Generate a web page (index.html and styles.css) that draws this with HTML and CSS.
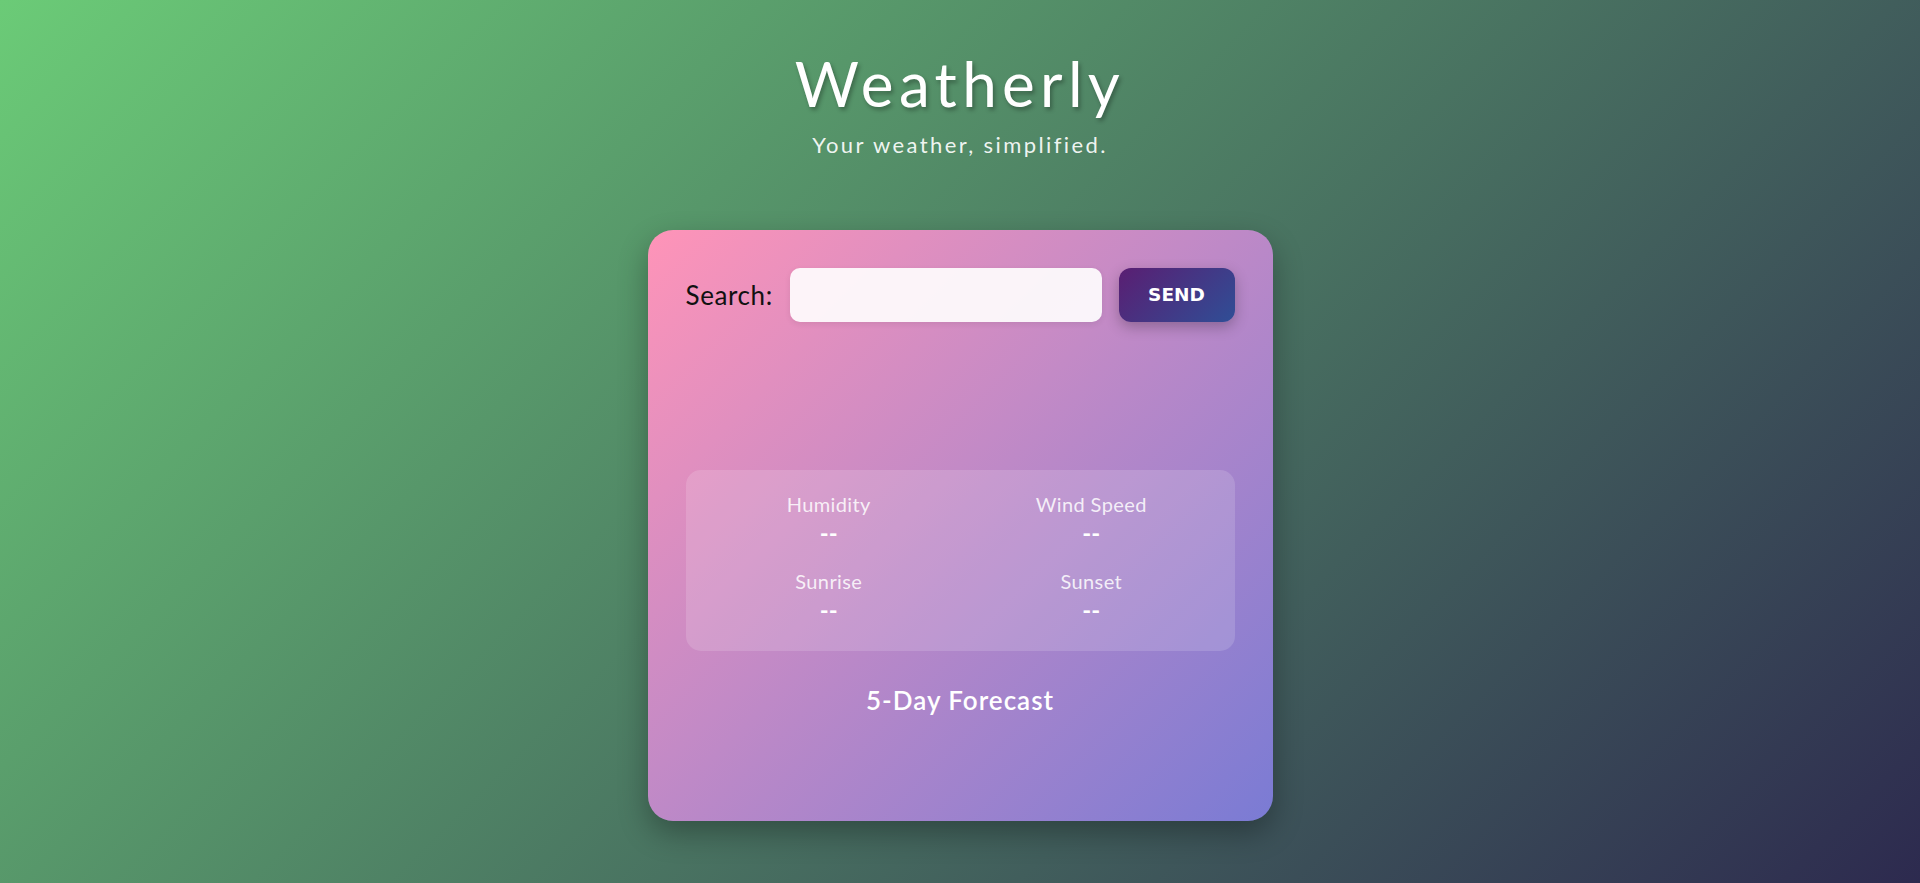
FILE: index.html
```html
<!DOCTYPE html>
<html lang="en">
<head>
<meta charset="utf-8">
<title>Weatherly</title>
<link rel="stylesheet" href="styles.css">
</head>
<body>
  <header class="header">
    <h1 class="title">Weatherly</h1>
    <p class="subtitle">Your weather, simplified.</p>
  </header>
  <main class="card">
    <form class="search" onsubmit="return false">
      <label class="search-label" for="city">Search:</label>
      <input class="search-input" id="city" type="text">
      <button class="send-btn" type="submit">SEND</button>
    </form>
    <section class="current"></section>
    <section class="stats">
      <div class="stat">
        <div class="stat-label">Humidity</div>
        <div class="stat-value">--</div>
      </div>
      <div class="stat">
        <div class="stat-label">Wind Speed</div>
        <div class="stat-value">--</div>
      </div>
      <div class="stat">
        <div class="stat-label">Sunrise</div>
        <div class="stat-value">--</div>
      </div>
      <div class="stat">
        <div class="stat-label">Sunset</div>
        <div class="stat-value">--</div>
      </div>
    </section>
    <h2 class="forecast-title">5-Day Forecast</h2>
    <section class="forecast"></section>
  </main>
</body>
</html>
```
FILE: styles.css
```css
html {
  min-height: 100%;
  background: linear-gradient(135deg, #6bcb77 0%, #2d2a4f 100%);
}
body {
  margin: 0;
  min-height: 100vh;
  font-family: "Lato", "Noto Sans", sans-serif;
  color: #fff;
  display: flex;
  flex-direction: column;
  align-items: center;
  overflow: hidden;
}
.header {
  display: flex;
  flex-direction: column;
  align-items: center;
  padding-top: 46px;
}
.title {
  margin: 0;
  font-size: 62px;
  line-height: 1.2;
  font-weight: 400;
  letter-spacing: 5.3px;
  text-shadow: 2px 3px 4px rgba(0, 0, 0, 0.3);
}
.subtitle {
  margin: 12px 0 0;
  font-size: 22px;
  line-height: 1.2;
  letter-spacing: 2.4px;
  color: rgba(255, 255, 255, 0.92);
}
.card {
  margin-top: 71px;
  width: 549px;
  padding: 38px;
  border-radius: 25px;
  background: linear-gradient(135deg, #ff94b8 0%, #c38ac6 45%, #7a7bd4 100%);
  box-shadow: 0 12px 30px rgba(0, 0, 0, 0.3);
}
.search {
  display: flex;
  align-items: center;
  gap: 17px;
  height: 54px;
  margin: 0;
}
.search-label {
  font-size: 26px;
  letter-spacing: 0.6px;
  color: #111;
}
.search-input {
  flex: 1;
  height: 54px;
  box-sizing: border-box;
  border: none;
  border-radius: 10px;
  background: rgba(255, 255, 255, 0.9);
  box-shadow: 0 2px 6px rgba(0, 0, 0, 0.08);
  outline: none;
  padding: 0 14px;
  font-family: inherit;
  font-size: 18px;
}
.send-btn {
  width: 116px;
  height: 54px;
  border: none;
  border-radius: 12px;
  background: linear-gradient(135deg, #5a1e72 0%, #2f4e96 100%);
  box-shadow: 0 5px 14px rgba(0, 0, 0, 0.25);
  color: #fff;
  font-family: "DejaVu Sans", "Liberation Sans", sans-serif;
  font-weight: 700;
  font-size: 18.5px;
}
.current {
  height: 148px;
}
.stats {
  display: grid;
  grid-template-columns: 1fr 1fr;
  column-gap: 24px;
  row-gap: 23px;
  padding: 23px 24px 27px;
  border-radius: 15px;
  background: rgba(255, 255, 255, 0.15);
}
.stat {
  display: flex;
  flex-direction: column;
  align-items: center;
}
.stat-label {
  font-size: 20px;
  line-height: 22px;
  letter-spacing: 0.4px;
  color: rgba(255, 255, 255, 0.85);
}
.stat-value {
  margin-top: 4px;
  font-size: 24px;
  line-height: 28px;
  font-weight: 700;
}
.forecast-title {
  margin: 34px 0 0;
  text-align: center;
  font-size: 26px;
  line-height: 1.2;
  font-weight: 600;
  letter-spacing: 1px;
}
.forecast {
  height: 67px;
}
```
